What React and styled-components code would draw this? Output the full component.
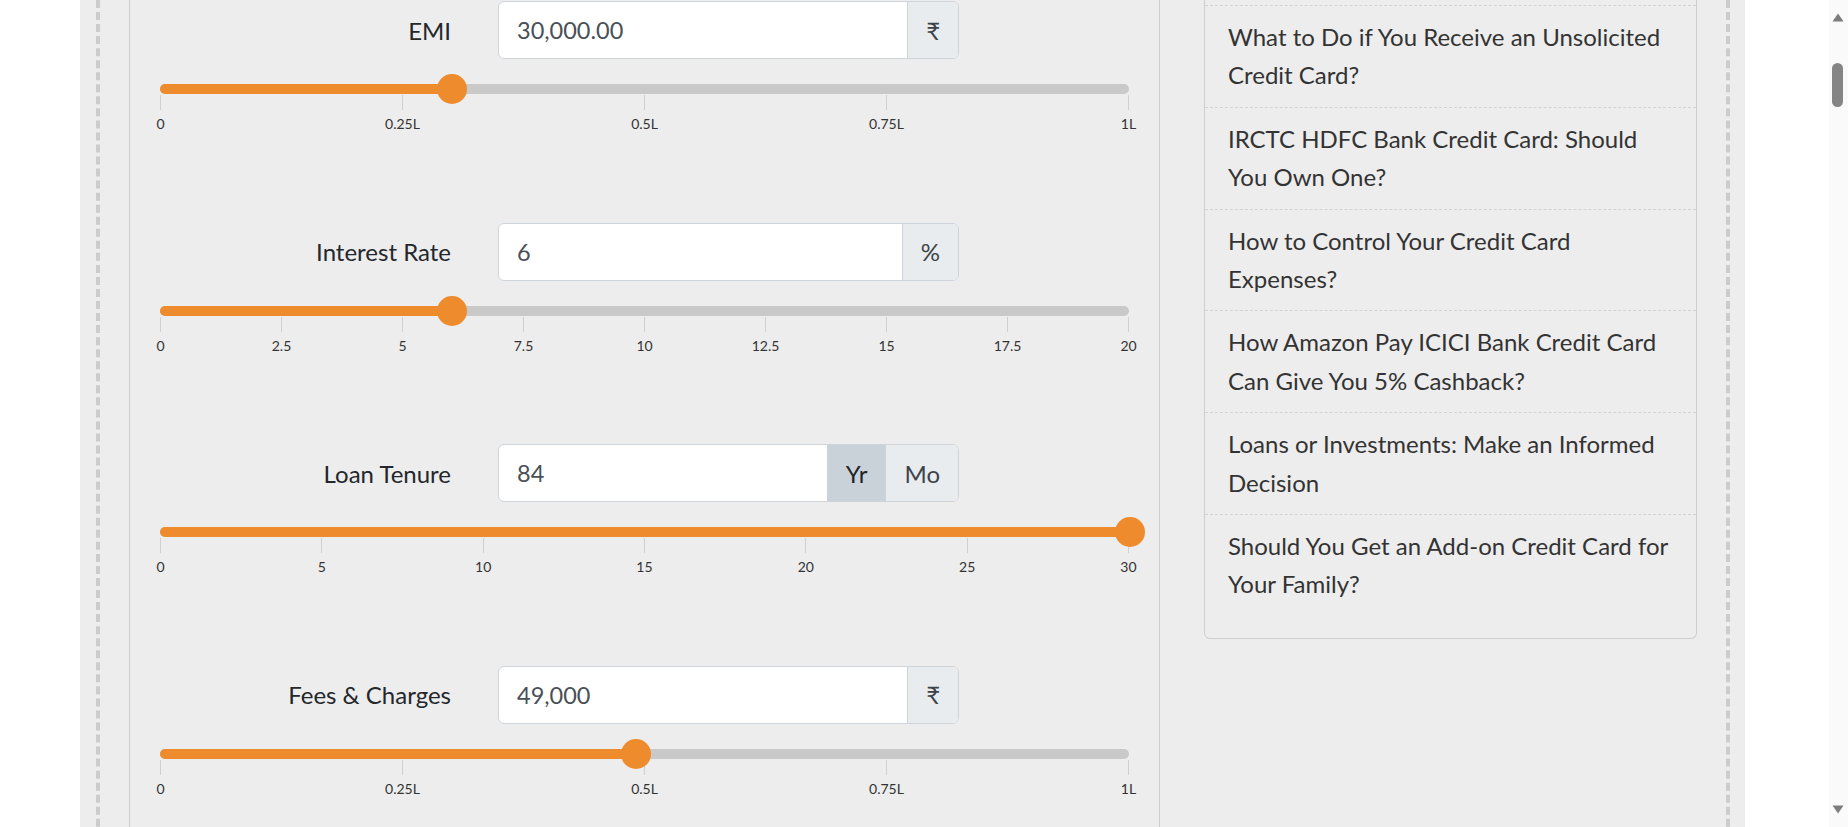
import React from 'react';
import styled, { createGlobalStyle } from 'styled-components';

const GlobalStyle = createGlobalStyle`
  html, body {
    margin: 0;
    padding: 0;
    background: #ffffff;
  }
  body {
    font-family: Lato, "Open Sans", "DejaVu Sans", sans-serif;
    color: #212529;
  }
`;

const fields = [
  {
    label: 'EMI',
    value: '30,000.00',
    amount: 30000,
    max: 100000,
    addons: [{ text: '₹' }],
    ticks: ['0', '0.25L', '0.5L', '0.75L', '1L'],
  },
  {
    label: 'Interest Rate',
    value: '6',
    amount: 6,
    max: 20,
    addons: [{ text: '%' }],
    ticks: ['0', '2.5', '5', '7.5', '10', '12.5', '15', '17.5', '20'],
  },
  {
    label: 'Loan Tenure',
    value: '84',
    amount: 84,
    max: 30,
    addons: [{ text: 'Yr', active: true }, { text: 'Mo' }],
    ticks: ['0', '5', '10', '15', '20', '25', '30'],
  },
  {
    label: 'Fees & Charges',
    value: '49,000',
    amount: 49000,
    max: 100000,
    addons: [{ text: '₹' }],
    ticks: ['0', '0.25L', '0.5L', '0.75L', '1L'],
  },
];

const articles = [
  'What to Do if You Receive an Unsolicited Credit Card?',
  'IRCTC HDFC Bank Credit Card: Should You Own One?',
  'How to Control Your Credit Card Expenses?',
  'How Amazon Pay ICICI Bank Credit Card Can Give You 5% Cashback?',
  'Loans or Investments: Make an Informed Decision',
  'Should You Get an Add-on Credit Card for Your Family?',
];

function RangeField({ field }) {
  const pct = Math.min(field.amount / field.max, 1) * 100;

  return (
    <Field>
      <FieldHead>
        <Label>{field.label}</Label>
        <InputGroup>
          <ValueInput type='text' value={field.value} readOnly />
          {field.addons.map((addon) => (
            <Addon key={addon.text} $active={addon.active}>
              {addon.text}
            </Addon>
          ))}
        </InputGroup>
      </FieldHead>

      {/* slider with scale */}
      <Slider>
        <Track>
          <Fill style={{ width: `${pct}%` }} />
          <Thumb style={{ left: `${pct}%` }} />
        </Track>
        <Scale>
          {field.ticks.map((t) => (
            <Tick key={t}>
              <TickLine />
              <TickLabel>{t}</TickLabel>
            </Tick>
          ))}
        </Scale>
      </Slider>
    </Field>
  );
}

function ScrollBar() {
  return (
    <Scroller>
      <ScrollArrow viewBox='0 0 12 9'>
        <path d='M6 0.5 L11.5 8.5 L0.5 8.5 Z' />
      </ScrollArrow>
      <ScrollTrack>
        <ScrollThumb />
      </ScrollTrack>
      <ScrollArrow viewBox='0 0 12 9'>
        <path d='M0.5 0.5 L11.5 0.5 L6 8.5 Z' />
      </ScrollArrow>
    </Scroller>
  );
}

function App() {
  return (
    <>
      <GlobalStyle />
      <Page>
        <Shell>
          <Frame>
            <Calculator>
              {fields.map((f) => (
                <RangeField key={f.label} field={f} />
              ))}
            </Calculator>

            {/* related articles */}
            <Sidebar>
              <ArticleList>
                {articles.map((a) => (
                  <Article key={a}>{a}</Article>
                ))}
              </ArticleList>
            </Sidebar>
          </Frame>
        </Shell>
      </Page>
      <ScrollBar />
    </>
  );
}

// styled components
const Page = styled.div`
  display: flex;
  min-height: 100vh;
  padding-left: 80px;
`;

const Shell = styled.main`
  display: flex;
  width: 1665px;
  box-sizing: border-box;
  padding: 0 15px 0 16px;
  background: #ededed;
`;

const Frame = styled.div`
  flex: 1;
  display: flex;
  align-items: flex-start;
  gap: 44px;
  padding: 0 29px;
  border-left: 4px dashed #cccccc;
  border-right: 4px dashed #cccccc;
`;

const Calculator = styled.section`
  align-self: stretch;
  width: 1031px;
  box-sizing: border-box;
  padding: 1px 30px 0;
  border-left: 1px solid #cfcfcf;
  border-right: 1px solid #cfcfcf;
`;

const Field = styled.div`
  height: 221.5px;
`;

const FieldHead = styled.div`
  display: flex;
  align-items: center;
  height: 58px;
`;

const Label = styled.label`
  width: 291px;
  margin-right: 47px;
  text-align: right;
  font-size: 24px;
  color: #24272b;
`;

const InputGroup = styled.div`
  display: flex;
  width: 461px;
  height: 58px;
  box-sizing: border-box;
  border: 1px solid #ced4da;
  border-radius: 6px;
  overflow: hidden;
  background: #ffffff;
`;

const ValueInput = styled.input`
  flex: 1;
  min-width: 0;
  padding: 0 18px;
  border: 0;
  outline: none;
  background: transparent;
  font-family: inherit;
  font-size: 23.5px;
  color: #495057;
`;

const Addon = styled.span`
  display: flex;
  align-items: center;
  padding: 0 18px;
  border-left: 1px solid #ced4da;
  background: ${({ $active }) => ($active ? '#cad2d9' : '#e9ecef')};
  font-size: 24px;
  color: ${({ $active }) => ($active ? '#212529' : '#3d4349')};
`;

const Slider = styled.div`
  margin-top: 25px;
`;

const Track = styled.div`
  position: relative;
  height: 10px;
  border-radius: 5px;
  background: #c9c9c9;
`;

const Fill = styled.div`
  height: 100%;
  border-radius: 5px;
  background: #ed8b2d;
`;

const Thumb = styled.span`
  position: absolute;
  top: 50%;
  width: 30px;
  height: 30px;
  margin: -15px 0 0 -14px;
  border-radius: 50%;
  background: #ed8b2d;
`;

const Scale = styled.div`
  display: flex;
  justify-content: space-between;
  margin-top: 1px;
`;

const Tick = styled.div`
  display: flex;
  flex-direction: column;
  align-items: center;
  width: 1px;
`;

const TickLine = styled.span`
  width: 1px;
  height: 15px;
  background: #d0d0d0;
`;

const TickLabel = styled.span`
  margin-top: 6px;
  font-size: 14px;
  line-height: 16px;
  white-space: nowrap;
  color: #333333;
`;

const Sidebar = styled.aside`
  width: 493px;
  box-sizing: border-box;
  padding: 5px 0 22px;
  border: 1px solid #cfcfcf;
  border-top: 0;
  border-radius: 0 0 6px 6px;
`;

const ArticleList = styled.ul`
  margin: 0;
  padding: 0;
  list-style: none;
`;

const Article = styled.li`
  padding: 12px 23px;
  border-top: 1px dashed #d3d3d3;
  font-size: 24px;
  line-height: 38.4px;
  color: #333333;
  cursor: pointer;
`;

// browser-like scrollbar drawn over the right edge
const Scroller = styled.div`
  position: fixed;
  top: 0;
  right: 0;
  bottom: 0;
  display: flex;
  flex-direction: column;
  align-items: center;
  width: 17px;
  padding: 0 2px 0 0;
  background: #fafafa;
`;

const ScrollArrow = styled.svg`
  width: 12px;
  height: 9px;
  margin: 13px 0;
  fill: #7d7d7d;
`;

const ScrollTrack = styled.div`
  flex: 1;
  display: flex;
  justify-content: center;
  padding-top: 28px;
`;

const ScrollThumb = styled.div`
  width: 11px;
  height: 44px;
  border-radius: 6px;
  background: #858585;
`;

export default App;
